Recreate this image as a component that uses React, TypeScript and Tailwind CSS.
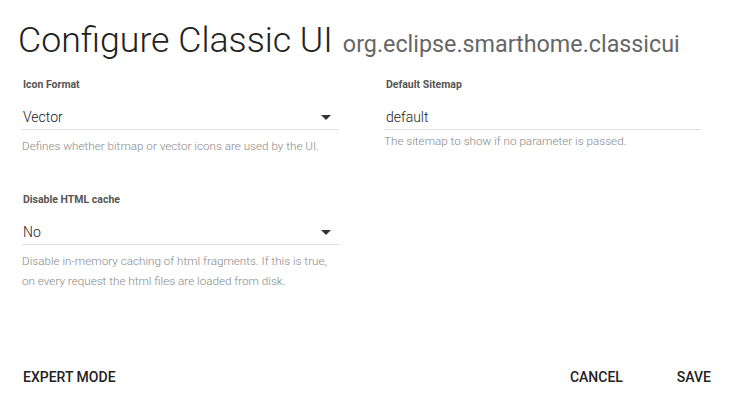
import React from "react";

function Caret() {
  return (
    <svg width="10" height="5" viewBox="0 0 10 5" className="shrink-0">
      <path d="M0 0 L10 0 L5 5 Z" fill="#333333" />
    </svg>
  );
}

function SelectField({ label, value, help }: { label: string; value: string; help: React.ReactNode }) {
  return (
    <div className="flex flex-col">
      <div className="text-[10.5px] font-bold text-[#555] leading-[12px] pl-[1px]">{label}</div>
      <div className="mt-[16px] flex items-center justify-between h-[20px] pl-[1px] pr-[8px]">
        <span className="text-[14px] font-light text-[#222] leading-[20px]">{value}</span>
        <Caret />
      </div>
      <div className="mt-[2px] h-px bg-[#e0e0e0]" />
      <div className="mt-[6px] text-[11.7px] font-light leading-[20px] text-[#888]">{help}</div>
    </div>
  );
}

function TextField({ label, value, help }: { label: string; value: string; help: React.ReactNode }) {
  return (
    <div className="flex flex-col">
      <div className="text-[10.5px] font-bold text-[#555] leading-[12px] pl-[2px]">{label}</div>
      <div className="mt-[16px] flex items-center h-[20px] pl-[2px]">
        <span className="text-[14px] font-light text-[#222] leading-[20px]">{value}</span>
      </div>
      <div className="mt-[2px] h-px bg-[#e0e0e0]" />
      <div className="mt-[1px] text-[11.7px] font-light leading-[20px] text-[#888]">{help}</div>
    </div>
  );
}

export default function App() {
  return (
    <div
      className="w-[741px] h-[400px] bg-white flex flex-col overflow-hidden"
      style={{ fontFamily: "Roboto, 'Liberation Sans', sans-serif" }}
    >
      <div className="pl-[18px] pt-[18px] h-[62px] flex items-baseline gap-[10px] whitespace-nowrap">
        <span className="text-[35.7px] font-light text-[#222] leading-[44px]">Configure Classic UI</span>
        <span className="text-[23.3px] text-[#666] leading-[30px]">org.eclipse.smarthome.classicui</span>
      </div>
      <div className="pl-[22px] pr-[40px] mt-[17px] grid grid-cols-[317px_317px] gap-x-[45px]">
        <div className="flex flex-col">
          <SelectField
            label="Icon Format"
            value="Vector"
            help="Defines whether bitmap or vector icons are used by the UI."
          />
          <div className="mt-[38px]">
            <SelectField
              label="Disable HTML cache"
              value="No"
              help={
                <>
                  Disable in-memory caching of html fragments. If this is true,
                  <br />
                  on every request the html files are loaded from disk.
                </>
              }
            />
          </div>
        </div>
        <div className="flex flex-col">
          <TextField
            label="Default Sitemap"
            value="default"
            help="The sitemap to show if no parameter is passed."
          />
        </div>
      </div>
      <div className="mt-auto mb-[15px] pl-[23px] pr-[30px] flex items-center justify-between">
        <button className="text-[14px] font-medium text-[#222] leading-[16px]">EXPERT MODE</button>
        <div className="flex items-center gap-[54px]">
          <button className="text-[14px] font-medium text-[#222] leading-[16px]">CANCEL</button>
          <button className="text-[14px] font-medium text-[#222] leading-[16px]">SAVE</button>
        </div>
      </div>
    </div>
  );
}
